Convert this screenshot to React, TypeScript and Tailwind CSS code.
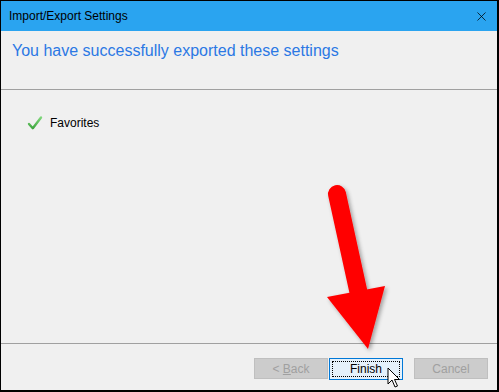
import { X } from 'lucide-react'

const font = { fontFamily: '"Liberation Sans", Arial, sans-serif' }

function Button({ label, disabled, focused }: { label: React.ReactNode; disabled?: boolean; focused?: boolean }) {
  if (focused) {
    return (
      <div className="w-[74px] h-[22px] border border-[#0078d7] bg-[#e5f1fb] p-[2px]">
        <div className="h-full w-full border border-dotted border-black flex items-center justify-center text-[12px] text-black">
          {label}
        </div>
      </div>
    )
  }
  return (
    <div
      className={`w-[74px] h-[21px] border flex items-center justify-center text-[12px] ${
        disabled ? 'border-[#bfbfbf] bg-[#cccccc] text-[#a0a0a0]' : 'border-[#adadad] bg-[#e1e1e1] text-black'
      }`}
    >
      {label}
    </div>
  )
}

export default function App() {
  return (
    <div
      className="relative w-[499px] h-[392px] bg-[#f0f0f0] border-l border-t border-b-2 border-r-2 border-black flex flex-col overflow-hidden"
      style={font}
    >
      {/* Title bar */}
      <div className="h-[30px] bg-[#2aa4f0] flex items-center justify-between pl-[8px] pr-[8px] shrink-0">
        <span className="text-[12px] text-black">Import/Export Settings</span>
        <X className="w-[15px] h-[15px] text-black" strokeWidth={1.2} />
      </div>

      {/* Header */}
      <div className="h-[58px] shrink-0 pl-[11px] pt-[10px]">
        <h1 className="text-[16px] text-[#2b78e4] leading-[20px]">You have successfully exported these settings</h1>
      </div>
      <div className="h-px bg-[#a0a0a0] shrink-0" />

      {/* Content */}
      <div className="flex-1 pl-[26px] pt-[24px]">
        <div className="flex items-center gap-[7px]">
          <svg width="16" height="16" viewBox="0 0 16 16">
            <defs>
              <linearGradient id="ck" x1="0" y1="0" x2="0" y2="1">
                <stop offset="0" stopColor="#7ed67a" />
                <stop offset="1" stopColor="#3fa53f" />
              </linearGradient>
            </defs>
            <path d="M2 9 L5.8 13.2 L14 2.5" fill="none" stroke="url(#ck)" strokeWidth="2.4" strokeLinecap="round" strokeLinejoin="round" />
          </svg>
          <span className="text-[12px] text-black">Favorites</span>
        </div>
      </div>
      <div className="h-px bg-[#a0a0a0] shrink-0" />

      {/* Footer */}
      <div className="h-[46px] shrink-0 flex items-start justify-end pt-[14px] pr-[9px]">
        <Button
          disabled
          label={
            <span>
              &lt; <u>B</u>ack
            </span>
          }
        />
        <div className="ml-[1px]">
          <Button focused label="Finish" />
        </div>
        <div className="ml-[11px]">
          <Button disabled label="Cancel" />
        </div>
      </div>

      {/* Red arrow annotation */}
      <svg className="absolute left-0 top-0 pointer-events-none" width="499" height="392" viewBox="0 0 499 392">
        <defs>
          <filter id="sh" x="-20%" y="-20%" width="140%" height="140%">
            <feGaussianBlur in="SourceAlpha" stdDeviation="2" />
            <feOffset dx="2" dy="2" result="b" />
            <feComponentTransfer>
              <feFuncA type="linear" slope="0.35" />
            </feComponentTransfer>
            <feMerge>
              <feMergeNode />
              <feMergeNode in="SourceGraphic" />
            </feMerge>
          </filter>
        </defs>
        <g filter="url(#sh)" fill="#ff0000">
          <line x1="336" y1="193" x2="359" y2="298" stroke="#ff0000" strokeWidth="18" strokeLinecap="round" />
          <polygon points="326,296 384,285 367,348" />
        </g>
      </svg>

      {/* Mouse cursor */}
      <svg className="absolute left-[386px] top-[366px]" width="14" height="22" viewBox="0 0 14 22">
        <path d="M1 1 L1 17 L5 13 L8 20 L10.5 19 L7.5 12.5 L12.5 12.5 Z" fill="#ffffff" stroke="#000000" strokeWidth="1" strokeLinejoin="miter" />
      </svg>
    </div>
  )
}
